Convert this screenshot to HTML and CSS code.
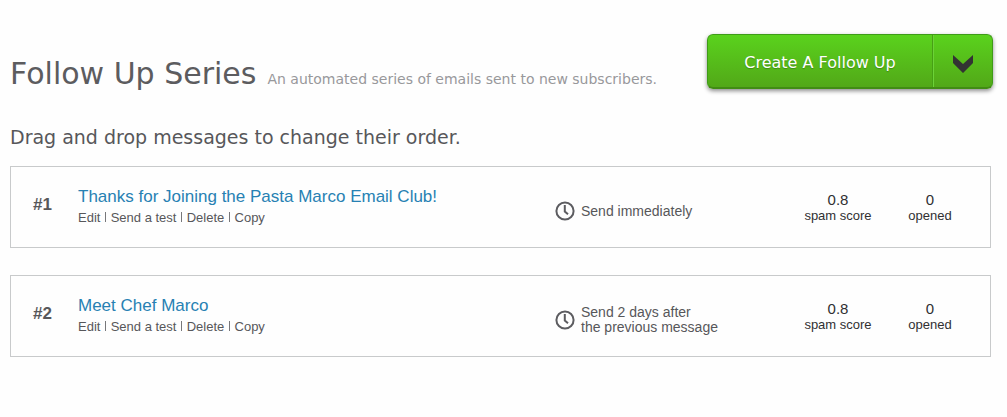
FILE: index.html
```html
<!DOCTYPE html>
<html lang="en">
<head>
    <meta charset="UTF-8">
    <meta name="viewport" content="width=device-width, initial-scale=1.0">
    <title>Follow Up Series</title>
    <link rel="stylesheet" href="styles.css">
</head>
<body>

<main>
    <header class="header">
        <div class="heading">
            <h1>Follow Up Series</h1>
            <p>An automated series of emails sent to new subscribers.</p>
        </div>
        <div class="create">
            <button type="button" class="create-main">Create A Follow Up</button>
            <button type="button" class="create-more" aria-label="More options">
                <svg width="22" height="20" viewBox="0 0 22 20"><path d="M1 1L11 10L21 1V9L11 19L1 9Z" fill="#333"/></svg>
            </button>
        </div>
    </header>

    <h2 class="hint">Drag and drop messages to change their order.</h2>

    <ol class="messages">
        <li class="message">
            <span class="number">#1</span>
            <div class="info">
                <a class="title" href="#">Thanks for Joining the Pasta Marco Email Club!</a>
                <div class="actions"><a href="#">Edit</a> <i></i> <a href="#">Send a test</a> <i></i> <a href="#">Delete</a> <i></i> <a href="#">Copy</a></div>
            </div>
            <div class="schedule">
                <svg width="20" height="20" viewBox="0 0 20 20" fill="none" stroke="#5c5c60" stroke-width="2"><circle cx="10" cy="10" r="8.6"/><path d="M9.8 4V10.5L13 13.2"/></svg>
                <span>Send immediately</span>
            </div>
            <div class="stat spam"><b>0.8</b>spam score</div>
            <div class="stat opened"><b>0</b>opened</div>
        </li>
        <li class="message">
            <span class="number">#2</span>
            <div class="info">
                <a class="title" href="#">Meet Chef Marco</a>
                <div class="actions"><a href="#">Edit</a> <i></i> <a href="#">Send a test</a> <i></i> <a href="#">Delete</a> <i></i> <a href="#">Copy</a></div>
            </div>
            <div class="schedule">
                <svg width="20" height="20" viewBox="0 0 20 20" fill="none" stroke="#5c5c60" stroke-width="2"><circle cx="10" cy="10" r="8.6"/><path d="M9.8 4V10.5L13 13.2"/></svg>
                <span>Send 2 days after<br>the previous message</span>
            </div>
            <div class="stat spam"><b>0.8</b>spam score</div>
            <div class="stat opened"><b>0</b>opened</div>
        </li>
    </ol>
</main>

</body>
</html>
```
FILE: styles.css
```css
*{
  margin: 0;
  padding: 0;
  box-sizing: border-box;
}
body{
  background-color: #fefefe;
  color: #57575a;
  font-family: "Liberation Sans", Arial, sans-serif;
}
main{
  padding: 34px 14px 24px 10px;
}
a{
  color: inherit;
  text-decoration: none;
}

/* header */
.header{
  display: flex;
  justify-content: space-between;
  align-items: flex-start;
}
.heading{
  display: flex;
  align-items: baseline;
  gap: 11px;
  padding-top: 22px;
  font-family: "DejaVu Sans", Verdana, sans-serif;
}
h1{
  font-size: 30px;
  line-height: 36px;
  font-weight: normal;
  color: #5c5c5f;
}
.heading p{
  font-size: 14px;
  color: #98989b;
}
.create{
  display: flex;
  width: 286px;
  height: 55px;
  border: 1px solid #3f9c18;
  border-bottom: 2px solid #418c14;
  border-radius: 6px;
  background: linear-gradient(#5ad21d, #52a818);
  box-shadow: 0 2px 4px rgba(0, 0, 0, .45);
}
.create button{
  border: 0;
  background: none;
  cursor: pointer;
}
.create .create-main{
  flex: 1;
  padding-top: 2px;
  color: #fff;
  font-family: "DejaVu Sans", Verdana, sans-serif;
  font-size: 16px;
  text-shadow: 0 1px 1px rgba(0, 0, 0, .25);
}
.create .create-more{
  width: 60px;
  padding-top: 8px;
  border-left: 1px solid #47a015;
  box-shadow: inset 1px 0 #6cd238;
}

.hint{
  margin-top: 33px;
  font-family: "DejaVu Sans", Verdana, sans-serif;
  font-size: 19px;
  line-height: 24px;
  font-weight: normal;
}

/* message list */
.messages{
  display: grid;
  gap: 27px;
  margin: 17px 2px 0 0;
  list-style: none;
}
.message{
  display: grid;
  grid-template-columns: 45px 1fr 237px 92px 92px;
  align-items: center;
  min-height: 82px;
  padding: 0 14px 0 22px;
  border: 1px solid #c8cacb;
}
.number{
  padding-bottom: 4px;
  font-size: 17px;
  font-weight: bold;
}
.title{
  display: block;
  font-size: 17px;
  line-height: 22px;
  color: #2781b3;
}
.actions{
  font-size: 13px;
  line-height: 20px;
}
.actions i{
  display: inline-block;
  width: 1px;
  height: 10px;
  margin: 0 1px;
  background-color: #77777a;
}
.schedule{
  display: flex;
  align-items: center;
  gap: 6px;
  padding-top: 8px;
  font-size: 14px;
  line-height: 15px;
}
.stat{
  font-size: 13px;
  line-height: 15px;
  text-align: center;
  color: #303032;
}
.stat b{
  display: block;
  font-size: 15px;
  line-height: 16px;
  font-weight: normal;
}
```
